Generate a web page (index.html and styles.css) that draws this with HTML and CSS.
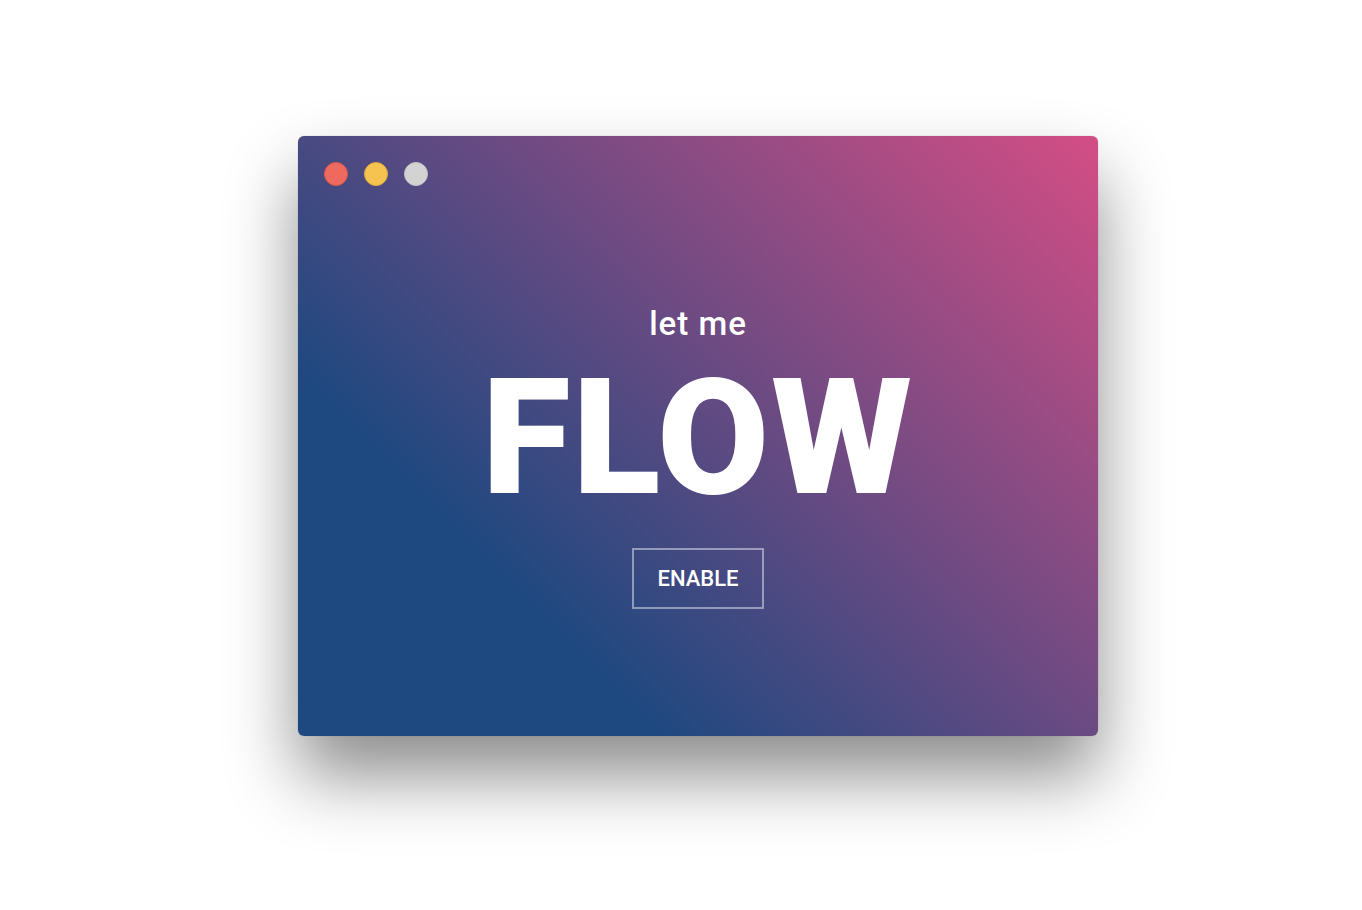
FILE: index.html
```html
<!DOCTYPE html>
<html>
<head>
<meta charset="utf-8">
<link rel="stylesheet" href="styles.css">
</head>
<body>
<div class="window">
  <div class="titlebar">
    <span class="dot red"></span>
    <span class="dot yellow"></span>
    <span class="dot grey"></span>
  </div>
  <div class="content">
    <div class="sub">let me</div>
    <div class="title">FLOW</div>
    <button class="btn">ENABLE</button>
  </div>
</div>
</body>
</html>
```
FILE: styles.css
```css
html, body {
  margin: 0;
  padding: 0;
  background: #ffffff;
  font-family: Roboto, "Noto Sans", sans-serif;
}
body {
  padding-top: 136px;
  height: 910px;
  box-sizing: border-box;
  overflow: hidden;
}
.window {
  width: 800px;
  height: 600px;
  margin-left: 298px;
  border-radius: 6px;
  background: linear-gradient(45deg, #1d4880 0%, #1d4880 25%, #d34e85 100%);
  box-shadow: 0 40px 70px rgba(0, 0, 0, 0.45), 0 0 1px rgba(0, 0, 0, 0.4);
  display: flex;
  flex-direction: column;
  overflow: hidden;
}
.titlebar {
  display: flex;
  gap: 16px;
  padding: 26px 0 0 26px;
  height: 50px;
  box-sizing: border-box;
}
.dot {
  width: 24px;
  height: 24px;
  border-radius: 50%;
  box-sizing: border-box;
}
.red { background: #ee6a5f; border: 1px solid #d8574d; }
.yellow { background: #f6c350; border: 1px solid #e0ac3e; }
.grey { background: #d3d3d3; border: 1px solid #c4c4c4; }
.content {
  flex: 1;
  display: flex;
  flex-direction: column;
  align-items: center;
  padding-top: 120px;
  color: #ffffff;
}
.sub {
  font-size: 33px;
  font-weight: 500;
  letter-spacing: 1px;
  line-height: 36px;
}
.title {
  font-size: 162px;
  font-weight: 900;
  letter-spacing: 2px;
  line-height: 160px;
  margin-top: 16px;
}
.btn {
  margin-top: 30px;
  width: 132px;
  height: 61px;
  background: transparent;
  border: 2px solid rgba(255, 255, 255, 0.45);
  color: #ffffff;
  font-family: Roboto, "Noto Sans", sans-serif;
  font-size: 22px;
  font-weight: 500;
  padding: 0;
}
```
